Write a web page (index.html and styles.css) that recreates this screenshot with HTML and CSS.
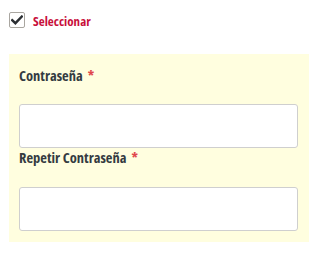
FILE: index.html
```html
<!DOCTYPE html>
<html>
<head>
<meta charset="utf-8">
<link rel="stylesheet" href="styles.css">
</head>
<body>
<div class="page">
  <label class="check">
    <span class="box">
      <svg width="12" height="10" viewBox="0 0 12 10"><path d="M1.2 5.2 L4.4 8.2 L10.8 1.6" fill="none" stroke="#2b2f33" stroke-width="2.4" stroke-linecap="square"/></svg>
    </span>
    <span class="check-text">Seleccionar</span>
  </label>
  <div class="panel">
    <div class="field first">
      <div class="label">Contraseña<span class="req">*</span></div>
      <div class="input"></div>
    </div>
    <div class="field second">
      <div class="label">Repetir Contraseña<span class="req">*</span></div>
      <div class="input"></div>
    </div>
  </div>
</div>
</body>
</html>
```

FILE: styles.css
```css
html, body {
  margin: 0;
  padding: 0;
  background: #fff;
}
body {
  font-family: "Open Sans", "Liberation Sans Narrow", sans-serif;
  font-stretch: 75%;
}
.page {
  padding: 12px 12px 0 9px;
}
.check {
  display: flex;
  align-items: center;
  gap: 8px;
  height: 16px;
}
.box {
  width: 14px;
  height: 14px;
  border: 1px solid #a9a6a0;
  border-radius: 2px;
  background: #fff;
  display: flex;
  align-items: center;
  justify-content: center;
}
.check-text {
  color: #c8103c;
  font-weight: 700;
  font-size: 13px;
  margin-top: 1px;
}
.panel {
  margin-top: 26px;
  width: 300px;
  background: #fffedf;
  padding: 12px 11px 11px 10px;
  box-sizing: border-box;
}
.label {
  font-weight: 700;
  font-size: 14.5px;
  color: #343b41;
  line-height: 20px;
}
.req {
  color: #e0474c;
  margin-left: 5px;
}
.field.first .label {
  margin-bottom: 18px;
}
.field.second .label {
  margin-bottom: 19px;
}
.input {
  height: 44px;
  box-sizing: border-box;
  border: 1px solid #cfcfcf;
  border-radius: 3px;
  background: #fff;
}
```
